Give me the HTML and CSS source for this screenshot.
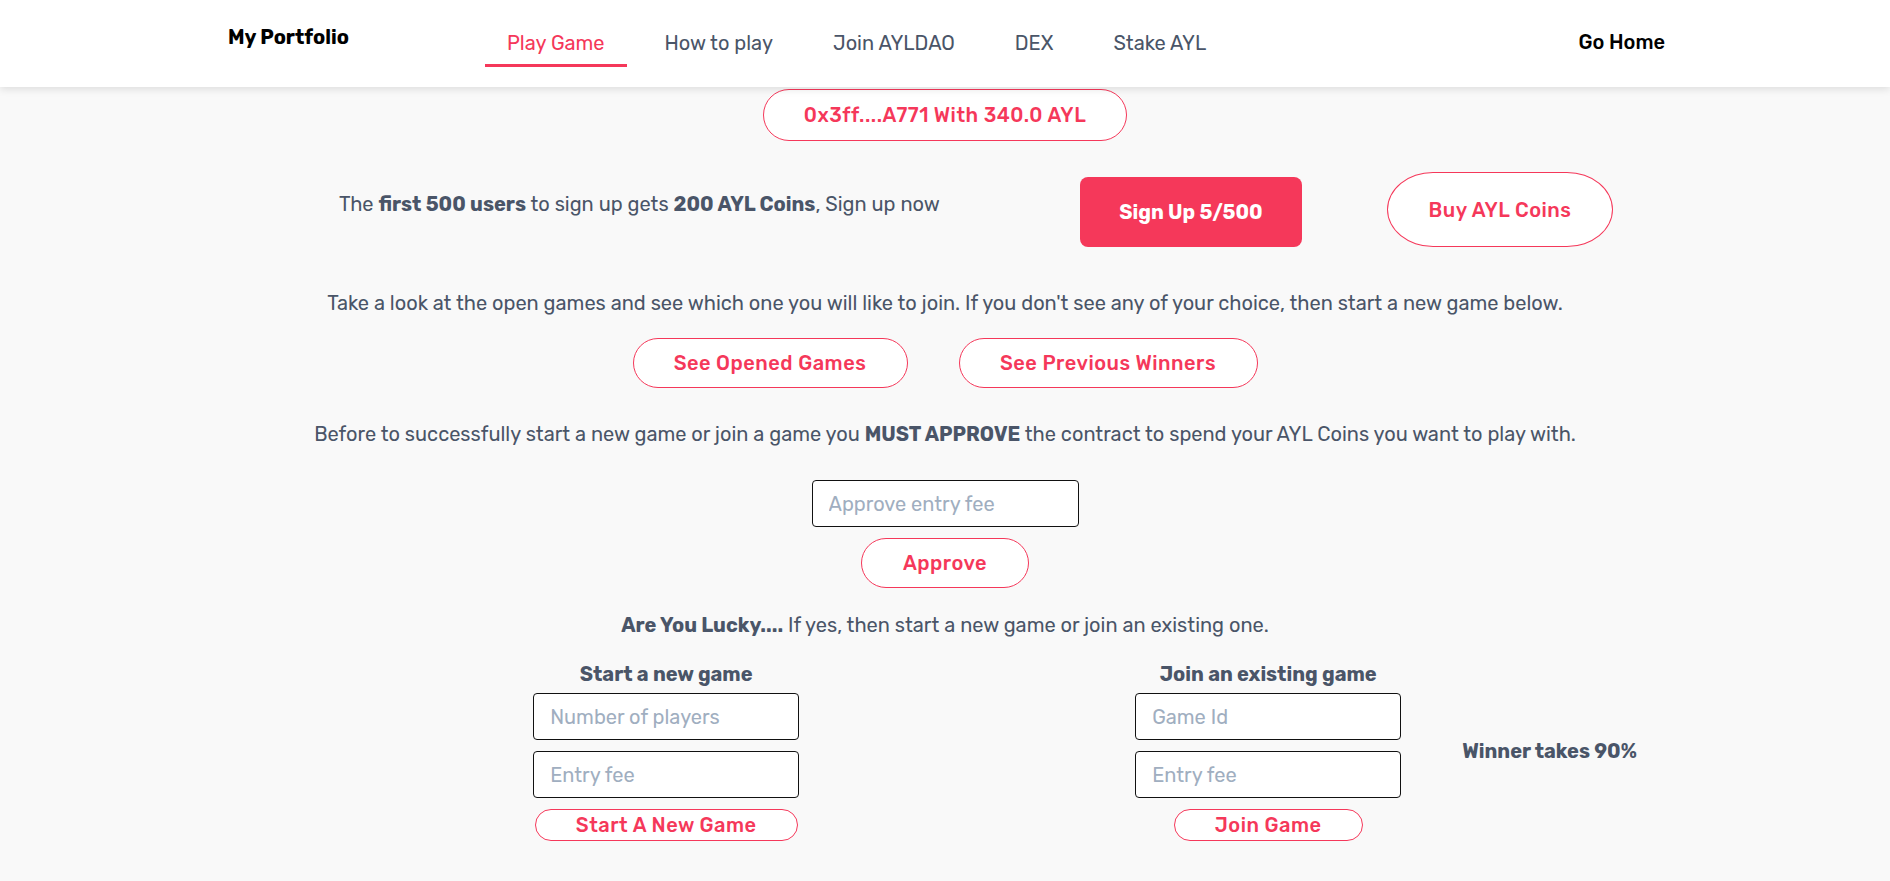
FILE: index.html
```html
<!DOCTYPE html>
<html lang="en">
<head>
<meta charset="utf-8">
<title>Play Game</title>
<link rel="stylesheet" href="styles.css">
</head>
<body>
<header class="topbar">
  <div class="topbar-inner">
    <a class="brand">My Portfolio</a>
    <nav class="nav">
      <a class="nav-item active">Play Game</a>
      <a class="nav-item">How to play</a>
      <a class="nav-item">Join AYLDAO</a>
      <a class="nav-item">DEX</a>
      <a class="nav-item">Stake AYL</a>
    </nav>
    <a class="go-home">Go Home</a>
  </div>
</header>

<main class="main">
  <button class="pill wallet">0x3ff....A771 With 340.0 AYL</button>

  <div class="signup-row">
    <p class="signup-text">The <b>first 500 users</b> to sign up gets <b>200 AYL Coins</b>, Sign up now</p>
    <button class="btn-solid">Sign Up 5/500</button>
    <button class="pill buy">Buy AYL Coins</button>
  </div>

  <p class="line look">Take a look at the open games and see which one you will like to join. If you don't see any of your choice, then start a new game below.</p>

  <div class="games-row">
    <button class="pill games-btn opened">See Opened Games</button>
    <button class="pill games-btn winners">See Previous Winners</button>
  </div>

  <p class="line before">Before to successfully start a new game or join a game you <b>MUST APPROVE</b> the contract to spend your AYL Coins you want to play with.</p>

  <input class="field approve-field" placeholder="Approve entry fee">
  <button class="pill approve-btn">Approve</button>

  <p class="line lucky"><b>Are You Lucky....</b> If yes, then start a new game or join an existing one.</p>

  <div class="play-row">
    <div class="play-col">
      <h3 class="col-title">Start a new game</h3>
      <input class="field col-field" placeholder="Number of players">
      <input class="field col-field" placeholder="Entry fee">
      <button class="small-pill start">Start A New Game</button>
    </div>
    <div class="play-col second">
      <h3 class="col-title">Join an existing game</h3>
      <input class="field col-field" placeholder="Game Id">
      <input class="field col-field" placeholder="Entry fee">
      <button class="small-pill join">Join Game</button>
    </div>
    <div class="winner">Winner takes 90%</div>
  </div>
</main>
</body>
</html>
```

FILE: styles.css
```css
* { box-sizing: border-box; }

body {
  margin: 0;
  background: #f9f9f9;
  font-family: "Rubik", Roboto, "Liberation Sans", sans-serif;
  color: #4a5568;
}

.topbar {
  background: #ffffff;
  height: 87px;
  box-shadow: 0 2px 8px rgba(0, 0, 0, 0.12);
  position: relative;
  z-index: 2;
}

.topbar-inner {
  width: 1440px;
  margin: 0 auto;
  height: 100%;
  display: flex;
  align-items: flex-start;
}

.brand {
  font-weight: 700;
  font-size: 20px;
  color: #000;
  margin: 25px 0 0 3px;
  width: 257px;
}

.nav {
  display: flex;
  gap: 16px;
  flex: 1;
}

.nav-item {
  padding: 31px 22px 0;
  height: 67px;
  font-size: 20px;
  color: #4a5568;
  border-bottom: 3px solid transparent;
}

.nav-item.active {
  color: #f5385a;
  border-bottom-color: #f5385a;
}

.go-home {
  font-size: 20px;
  font-weight: 500;
  color: #000;
  margin-top: 30px;
}

.main {
  display: flex;
  flex-direction: column;
  align-items: center;
}

button {
  font-family: inherit;
  cursor: pointer;
}

.pill {
  background: #fff;
  border: 1px solid #f5385a;
  color: #f5385a;
  border-radius: 9999px;
  font-size: 20px;
  font-weight: 500;
  letter-spacing: 0.025em;
}

.wallet {
  margin-top: 2px;
  width: 364px;
  height: 52px;
}

.signup-row {
  display: flex;
  align-items: flex-start;
  margin-top: 31px;
  width: 1274px;
  margin-left: 62px;
}

.signup-text {
  margin: 20px 0 0;
  font-size: 20px;
  width: 741px;
}

.signup-text b, .line b { font-weight: 700; }

.btn-solid {
  margin-top: 5px;
  width: 222px;
  height: 70px;
  background: #f5385a;
  color: #fff;
  border: none;
  border-radius: 8px;
  font-size: 20px;
  font-weight: 700;
}

.buy {
  margin-left: 85px;
  width: 226px;
  height: 75px;
  border-radius: 46px / 50%;
}

.line {
  font-size: 20px;
  margin: 0;
  text-align: center;
}

.look { margin-top: 44px; }

.games-row {
  display: flex;
  gap: 51px;
  margin-top: 23px;
}

.games-btn { height: 50px; }
.opened { width: 275px; }
.winners { width: 299px; }

.before { margin-top: 34px; }

.field {
  font-family: inherit;
  font-size: 20px;
  background: #fff;
  border: 1px solid #111;
  border-radius: 4px;
  padding: 0 16px;
  color: #4a5568;
}

.field::placeholder { color: #a0aec0; }

.approve-field {
  margin-top: 34px;
  width: 267px;
  height: 47px;
}

.approve-btn {
  margin-top: 11px;
  width: 168px;
  height: 50px;
}

.lucky { margin-top: 25px; }

.play-row {
  display: flex;
  align-items: flex-start;
  margin-top: 25px;
  margin-left: 280px;
}

.play-col {
  display: flex;
  flex-direction: column;
  align-items: center;
  width: 266px;
}

.play-col.second { margin-left: 336px; }

.col-title {
  margin: 0 0 7px;
  font-size: 20px;
  font-weight: 700;
}

.col-field {
  width: 266px;
  height: 47px;
  margin-bottom: 11px;
}

.small-pill {
  background: #fff;
  border: 1px solid #f5385a;
  color: #f5385a;
  border-radius: 9999px;
  font-size: 20px;
  font-weight: 500;
  letter-spacing: 0.025em;
  height: 32px;
  padding: 0;
}

.start { width: 263px; }
.join { width: 189px; }

.winner {
  margin: 77px 0 0 61px;
  font-size: 20px;
  font-weight: 700;
}
```
